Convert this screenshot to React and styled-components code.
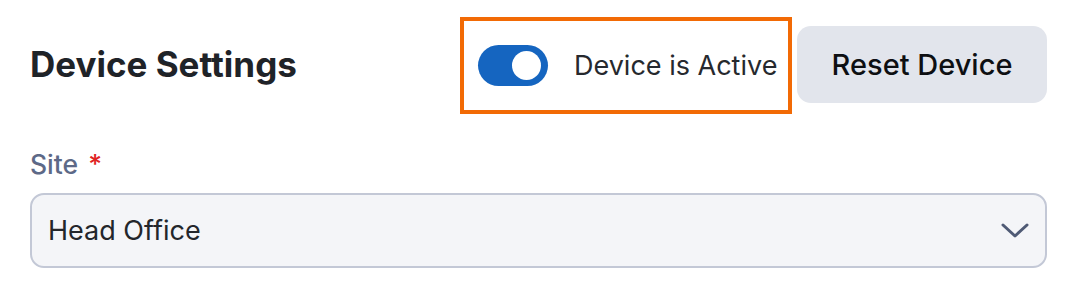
import React, { useState } from "react";
import styled, { createGlobalStyle } from "styled-components";

const GlobalStyle = createGlobalStyle`
  body {
    margin: 0;
    background: #ffffff;
    font-family: Inter, "Noto Sans", sans-serif;
  }
`;

const App = () => {
  const [active, setActive] = useState(true);
  return (
    <>
      <GlobalStyle />
      <StyledRoot>
        <StyledHeader>
          <h1>Device Settings</h1>
          <StyledActions>
            <StyledHighlight>
              <StyledToggle
                type="button"
                $on={active}
                onClick={() => setActive(!active)}
                aria-pressed={active}
              />
              <span>Device is Active</span>
            </StyledHighlight>
            <StyledButton type="button">Reset Device</StyledButton>
          </StyledActions>
        </StyledHeader>
        <StyledField>
          <StyledLabel>
            Site <em>*</em>
          </StyledLabel>
          <StyledSelect>
            <span>Head Office</span>
            <svg width="28" height="18" viewBox="0 0 28 18" fill="none">
              <path
                d="M2 3L14 14L26 3"
                stroke="#4f5a75"
                strokeWidth="3"
                strokeLinecap="round"
                strokeLinejoin="round"
              />
            </svg>
          </StyledSelect>
        </StyledField>
      </StyledRoot>
    </>
  );
};

export default App;

const StyledRoot = styled.div`
  width: 1017px;
  padding: 17px 0 0 30px;
`;

const StyledHeader = styled.div`
  display: flex;
  align-items: center;
  justify-content: space-between;
  & > h1 {
    margin: 0 0 4px;
    font-size: 35px;
    font-weight: 700;
    color: #1f2328;
    letter-spacing: 0;
  }
`;

const StyledActions = styled.div`
  display: flex;
  align-items: center;
  gap: 5px;
`;

const StyledHighlight = styled.label`
  box-sizing: border-box;
  display: flex;
  align-items: center;
  gap: 26px;
  width: 332px;
  height: 97px;
  padding: 0 10px 0 14px;
  border: 4px solid #f26a05;
  & > span {
    font-size: 27px;
    color: #26292e;
    white-space: nowrap;
  }
`;

const StyledToggle = styled.button`
  position: relative;
  flex-shrink: 0;
  width: 70px;
  height: 41px;
  border: none;
  border-radius: 21px;
  padding: 0;
  background: ${({ $on }) => ($on ? "#1565c0" : "#c3c8d6")};
  cursor: pointer;
  &::after {
    content: "";
    position: absolute;
    top: 6px;
    left: ${({ $on }) => ($on ? "34px" : "6px")};
    width: 29px;
    height: 29px;
    border-radius: 50%;
    background: #ffffff;
  }
`;

const StyledButton = styled.button`
  width: 250px;
  height: 77px;
  margin-bottom: 2px;
  border: none;
  border-radius: 14px;
  background: #e2e5ec;
  font-family: inherit;
  font-size: 29px;
  font-weight: 500;
  color: #0d0f12;
  cursor: pointer;
`;

const StyledField = styled.div`
  margin-top: 34px;
  display: flex;
  flex-direction: column;
  gap: 13px;
`;

const StyledLabel = styled.div`
  font-size: 26.5px;
  font-weight: 500;
  color: #5d6987;
  & > em {
    font-style: normal;
    color: #e02424;
    margin-left: 3px;
  }
`;

const StyledSelect = styled.div`
  box-sizing: border-box;
  display: flex;
  align-items: center;
  justify-content: space-between;
  height: 75px;
  padding: 0 16px 0 16px;
  border: 2px solid #c3c8d6;
  border-radius: 14px;
  background: #f4f5f8;
  font-size: 27px;
  color: #23262b;
`;
